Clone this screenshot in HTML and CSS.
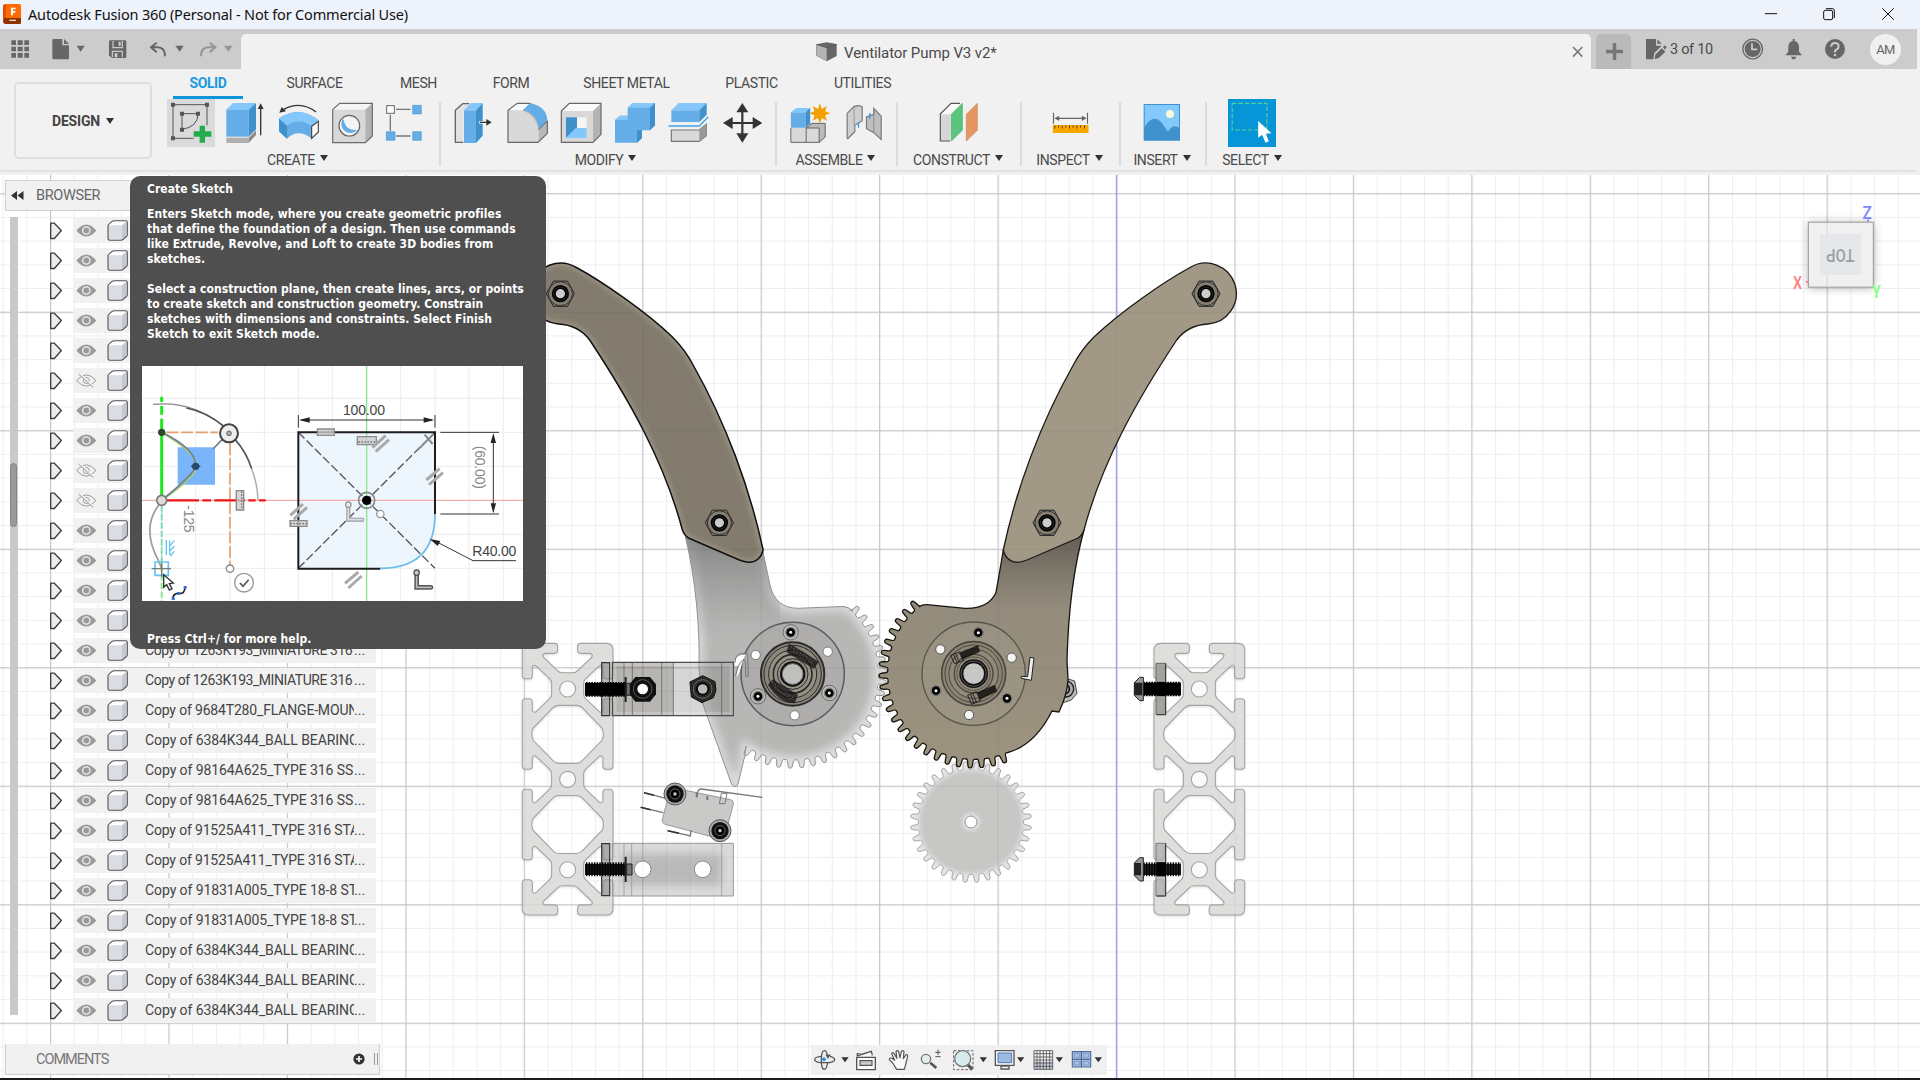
FILE: index.html
```html
<!DOCTYPE html>
<html lang="en">
<head>
<meta charset="utf-8">
<title>Autodesk Fusion 360</title>
<link rel="stylesheet" href="styles.css">
</head>
<body>
<svg class="defs" width="0" height="0">
  <defs>
    <symbol id="i-arrow" viewBox="138 142.5 81 75"><path d="M152 158h11l21 22-21 24h-11z" fill="#ececee" stroke="#3c3c3c" stroke-width="4" stroke-linejoin="round"/></symbol>
    <symbol id="i-eye" viewBox="219 142.5 90 75"><path d="M229 180q30-36 60 0q-30 36-60 0z" fill="#9a9a9a"/><circle cx="259" cy="180" r="11" fill="#9a9a9a" stroke="#f1f1f1" stroke-width="4"/></symbol>
    <symbol id="i-eye-off" viewBox="219 142.5 90 75"><g fill="none" stroke="#9a9a9a" stroke-width="3"><path d="M230 180q29-34 58 0q-29 34-58 0z"/><circle cx="259" cy="180" r="9"/><path d="M238 160l44 40" stroke="#f1f1f1" stroke-width="6"/><path d="M236 161l44 40"/></g></symbol>
    <symbol id="i-body" viewBox="309 142.5 90 75"><path d="M324 166q0-3 4-6l9-8q2-1 6-1h34q5 0 5 5v36q0 4-3 6l-11 10q-2 1-6 1h-32q-6 0-6-5z" fill="#fff"/><path d="M324 168q0-4 5-4h34q4 0 4 4v40h-36q-7 0-7-5z" fill="#dcdde3"/><path d="M366 164l14-12v44l-14 12z" fill="#c6c8d0"/><path d="M324 166q0-3 4-6l9-8q2-1 6-1h34q5 0 5 5v36q0 4-3 6l-11 10q-2 1-6 1h-32q-6 0-6-5z" fill="none" stroke="#4e5057" stroke-width="3.2"/></symbol>
    <symbol id="s-nut" viewBox="-20 -20 40 40" overflow="visible"><path d="M-7-12.6L7-12.6L14 0L7 12.6L-7 12.6L-14 0Z" fill="#857e70" stroke="#222" stroke-width="1"/><circle r="12" fill="none" stroke="#333"/><circle r="8.6" fill="#000"/><circle r="6.6" fill="none" stroke="#444" stroke-width=".6"/><circle r="4.6" fill="#ccc"/></symbol>
  </defs>
</svg>

<div class="app">
  <header class="titlebar">
    <svg class="logo" viewBox="9 12 54 60"><rect x="11" y="12" width="52" height="60" rx="5" fill="#ff6b00"/><path d="M9 16l8-4v60l-8-5z" fill="#d94f00"/><path d="M11 54h52v14q0 4-4 4H15l-4-4z" fill="#8f3200"/><path d="M33 23h14v5h-8v5h7v5h-7v8h-6z" fill="#fff"/><path d="M28 61h20" stroke="#fff" stroke-width="4" opacity=".8"/></svg>
    <span class="app-name">Autodesk Fusion 360 (Personal - Not for Commercial Use)</span>
    <svg class="win-controls" viewBox="1050 0 510 87" fill="none" stroke="#111" stroke-width="3"><path d="M1095 41h36"/><rect x="1271" y="31" width="27" height="28" rx="5"/><path d="M1278 26h20q5 0 5 6v22"/><path d="M1447 25l34 34M1481 25l-34 34"/></svg>
  </header>

  <div class="quickbar">
    <div class="quick-left">
      <svg width="40" height="40" viewBox="0 87 120 120" fill="#666"><path d="M34 121h14v14H34zM53 121h15v14H53zM73 121h14v14H73zM34 140h14v14H34zM53 140h15v14H53zM73 140h14v14H73zM34 159h14v14H34zM53 159h15v14H53zM73 159h14v14H73z"/></svg>
      <svg width="60" height="40" viewBox="120 87 180 120" fill="#666"><path d="M157 121q0-4 4-4h26v19h20v38q0 4-4 4h-42q-4 0-4-4z"/><path d="M192 117l15 15h-15z"/><path d="M230 137h24l-12 18z"/></svg>
      <svg width="40" height="40" viewBox="300 87 120 120"><path d="M327 125q0-4 4-4h44q4 0 4 4v46q0 3-4 3h-40l-8-8z" fill="#666"/><path d="M339 123v20h28v-20M337 172v-18h30v18" fill="none" stroke="#ccc" stroke-width="3.5"/><path d="M344 160h8v12h-8zM356 125h6v13h-6z" fill="#ccc"/></svg>
      <svg width="50" height="40" viewBox="420 87 150 120"><path d="M470 128l-17 14 17 15M455 142h18q22 0 22 27" fill="none" stroke="#666" stroke-width="6"/><path d="M526 137h25l-12 18z" fill="#666"/></svg>
      <svg width="51" height="40" viewBox="570 87 153 120"><path d="M629 128l17 14-17 15M645 142h-20q-22 0-22 27" fill="none" stroke="#959595" stroke-width="6"/><path d="M672 137h25l-12 18z" fill="#959595"/></svg>
    </div>
    <div class="doc-tab">
      <svg width="22" height="20" viewBox="1127 124 66 60"><path d="M1128 131l31-6 30 5v36l-30 16-31-17z" fill="#666"/><path d="M1129 132l30 9v40l-30-16z" fill="#b4b4b4"/><path d="M1129 132l30 9 30-9" fill="none" stroke="#555" stroke-width="2"/></svg>
      <span>Ventilator Pump V3 v2*</span>
      <svg class="tab-close" width="14" height="14" viewBox="512 134 42 42"><path d="M518 140l28 29M546 140l-28 29" stroke="#7c7c7c" stroke-width="5"/></svg>
    </div>
    <div class="new-tab"><svg width="17" height="17" viewBox="0 0 17 17"><path d="M8.5 0v17M0 8.500h17" stroke="#767676" stroke-width="3.400"/></svg></div>
    <div class="quick-right">
      <svg width="38" height="40" viewBox="693 87 114 120"><path d="M738 117h30v20h17l-22 22-3 19h-22z" fill="#666"/><path d="M772 118l13 13h-13z" fill="#666"/><path d="M766 164l19-19 11 10-20 19-12 4z" fill="#666"/><path d="M789 141l6-5 5 6-6 7z" fill="#666"/></svg>
      <span class="doc-count">3 of 10</span>
      <svg width="36" height="40" viewBox="1014 87 108 120"><circle cx="1058" cy="147" r="29.500" fill="none" stroke="#666" stroke-width="4"/><circle cx="1058" cy="147" r="24" fill="#666"/><path d="M1056 130v18h16" fill="none" stroke="#ccc" stroke-width="5"/></svg>
      <svg width="41" height="40" viewBox="1122 87 123 120"><path d="M1156 166l9-11v-13q0-16 13-19v-6h6v6q13 3 13 19v13l9 11zM1173 170h16q-2 8-8 8t-8-8z" fill="#666"/></svg>
      <svg width="41" height="40" viewBox="1245 87 123 120"><circle cx="1305" cy="147" r="30" fill="#666"/><path d="M1294 140q0-11 11-11t11 10q0 6-6 9t-5 9" fill="none" stroke="#ccc" stroke-width="6"/><circle cx="1305" cy="165" r="3.800" fill="#ccc"/></svg>
      <div class="avatar-slot"><span class="avatar">AM</span></div>
    </div>
  </div>

  <section class="ribbon">
    <button class="workspace">DESIGN<i class="caret"></i></button>
    <div class="ribbon-main">
      <nav class="tabs"><span class="active">SOLID</span><span>SURFACE</span><span>MESH</span><span>FORM</span><span>SHEET METAL</span><span>PLASTIC</span><span>UTILITIES</span></nav>
      <div class="groups">
        <div class="group create">
          <div class="tools">
            <svg class="hover" viewBox="501 297 144 144"><g fill="none" stroke="#555" stroke-width="3"><path d="M519 314h102v62M519 314v101h62M546 388v-47h48q0 40-48 47z"/></g><path d="M513 308h12v12h-12zM615 308h12v12h-12zM513 409h12v12h-12zM540 335h12v12h-12zM588 335h12v12h-12zM540 383h12v12h-12z" fill="#555"/><path d="M599 377h16v17h19v16h-19v18h-16v-18h-18v-16h18z" fill="#22ac4b"/></svg>
            <svg viewBox="663 297 144 144"><path d="M679 413h67v16h-67z" fill="#b0b0b0"/><path d="M746 413l22-22v14l-22 24z" fill="#8b8b8b"/><path d="M679 329l20-20h69l-22 20z" fill="#84c7fa"/><path d="M679 329h67v81h-67z" fill="#64ade6"/><path d="M746 329l22-20v79l-22 22z" fill="#3f90cb"/><path d="M782 406v-88" stroke="#333" stroke-width="4"/><path d="M773 327l9-17 9 17z" fill="#333"/></svg>
            <svg viewBox="825 297 144 144"><path d="M837 356q58-42 119 5l-18 17-3 38q-40-32-74 0l-24-23z" fill="#64ade6"/><path d="M837 356q58-42 119 5l-20 18q-40-28-75-2z" fill="#84c7fa"/><path d="M837 356l24 21v39l-24-22z" fill="#3f90cb"/><path d="M935 379l20-15v32l-20 19z" fill="#fff" stroke="#444" stroke-width="3.500"/><path d="M948 336q-46-35-97-8" fill="none" stroke="#333" stroke-width="4"/><path d="M838 338l7-17 13 13z" fill="#333"/></svg>
            <svg viewBox="987 297 144 144"><path d="M998 329l21-19h98l-21 19z" fill="#f5f5f5"/><path d="M998 329h98v99h-98z" fill="#d8d8d8"/><path d="M1096 329l21-19v98l-21 20z" fill="#b3b3b3"/><path d="M998 329l21-19h98v98l-21 20h-98z" fill="none" stroke="#6b6b6b" stroke-width="3.500"/><circle cx="1048" cy="377" r="31" fill="#f4f4f4" stroke="#666" stroke-width="3.500"/><path d="M1030 355q5 40 42 34a26 26 0 1 1-42-34z" fill="#64ade6"/></svg>
            <svg viewBox="1149 297 144 144"><path d="M1188 328h44M1171 344v48M1188 408h44" stroke="#777" stroke-width="4"/><rect x="1160" y="317" width="23" height="23" fill="#fff" stroke="#666" stroke-width="3"/><path d="M1238 316h26v26h-26zM1159 395h26v26h-26zM1238 395h26v26h-26z" fill="#64ade6" stroke="#3f90cb" stroke-width="1.500"/></svg>
          </div>
          <div class="label">CREATE<i class="caret"></i></div>
        </div>
        <div class="group modify">
          <div class="tools">
            <svg viewBox="27 297 144 144"><path d="M46 331l22-20h20v18l-18 12v86H46z" fill="#e2e2e2"/><path d="M88 311H68l-22 20v96h24" fill="none" stroke="#666" stroke-width="4"/><path d="M72 331l21-22h35l-20 22z" fill="#84c7fa"/><path d="M72 331h36v98H72z" fill="#64ade6"/><path d="M108 331l20-22v98l-20 22z" fill="#3f90cb"/><path d="M117 367h25" stroke="#fff" stroke-width="8"/><path d="M119 367h23" stroke="#333" stroke-width="4"/><path d="M139 357l16 10-16 10z" fill="#333"/></svg>
            <svg viewBox="189 297 144 144"><path d="M204 331l28-21h38q44 15 52 52v38l-28 27h-90z" fill="#b8b8b8"/><path d="M204 331l28-21h38l-22 22z" fill="#fafafa"/><path d="M204 332h42q40 8 50 60v35h-92z" fill="#d9d9d9"/><path d="M270 310h-38l-28 21v96h90l28-27v-38M296 388l26-26" fill="none" stroke="#666" stroke-width="3.500"/><path d="M248 331l23-22q50 12 51 52l-25 26q-8-49-49-56z" fill="#64ade6"/></svg>
            <svg viewBox="351 297 144 144"><path d="M364 333l24-23h95v93l-24 24h-95z" fill="#fafafa"/><path d="M459 333l24-23v93l-24 24z" fill="#b3b3b3"/><path d="M364 333h95v94h-95z" fill="#d8d8d8"/><path d="M364 333l24-23h95v93l-24 24h-95z" fill="none" stroke="#666" stroke-width="3.500"/><path d="M378 352h62v62h-62z" fill="#f5f5f5"/><path d="M378 352h33v32l-33 30z" fill="#3f90cb"/><path d="M378 414l29-30h33v30z" fill="#84c7fa"/></svg>
            <svg viewBox="513 297 144 144"><path d="M525 360l15-13h23v-24l15-14h67v67l-15 15h-24v23l-15 14h-66z" fill="#64ade6"/><path d="M563 323l15-14h67l-15 14zM525 360l15-13h23v13z" fill="#84c7fa"/><path d="M630 323l15-14v67l-15 15zM591 391h15v23l-15 14z" fill="#3f90cb"/></svg>
            <svg viewBox="675 297 144 144"><path d="M694 331l22-22h84l-22 22z" fill="#84c7fa"/><path d="M694 331h84v35h-84z" fill="#64ade6"/><path d="M778 331l22-22v35l-22 22z" fill="#3f90cb"/><path d="M686 378h92l27-28" fill="none" stroke="#3fa3e8" stroke-width="4"/><path d="M694 390h84l21-17v34l-21 17h-84z" fill="#d9d9d9" stroke="#777" stroke-width="3.500"/><path d="M778 390l21-18v35l-21 17z" fill="#999"/></svg>
            <svg viewBox="837 297 144 144"><path d="M907 330v78M870 369h76" stroke="#333" stroke-width="6.500"/><path d="M907 309l18 28h-36zM907 428l18-28h-36zM849 369l29-18v36zM967 369l-29-18v36z" fill="#333"/></svg>
          </div>
          <div class="label">MODIFY<i class="caret"></i></div>
        </div>
        <div class="group">
          <div class="tools">
            <svg viewBox="1033.500 297 144 144"><path d="M1051 384l1 44h84l18-16v-42h-40z" fill="#d9d9d9"/><path d="M1136 384l18-14v42l-18 16zM1097 384l14-14h43l-18 14z" fill="#bbb"/><path d="M1051 384v43h85l18-16v-41h-40l-17 14v43M1097 384h39v43" fill="none" stroke="#666" stroke-width="3"/><path d="M1051 337l16-13h42l-14 13z" fill="#84c7fa"/><path d="M1051 337h44v46h-44z" fill="#64ade6"/><path d="M1095 337l14-13v46l-14 13z" fill="#3f90cb"/><path d="M1138 310l6 17 15-9-5 16 15 6-15 6 5 16-15-8-6 17-6-17-15 8 5-16-16-6 16-6-5-16 15 9z" fill="#f4a000"/></svg>
            <svg viewBox="1195.500 297 144 144"><path d="M1220 340l21-21q18-5 24 2v41l-22 14v19l-21 21q-3 0-2-6z" fill="#cfcfcf" stroke="#777" stroke-width="3.500"/><path d="M1241 322v55" stroke="#999" stroke-width="3"/><path d="M1300 325l22 24v69l-22-20-22-12v-35l22-8z" fill="#bfbfbf" stroke="#777" stroke-width="3.500"/><path d="M1300 325v72" stroke="#888" stroke-width="3"/><path d="M1254 366v17M1288 339v17" stroke="#2d9ae5" stroke-width="4"/></svg>
          </div>
          <div class="label">ASSEMBLE<i class="caret"></i></div>
        </div>
        <div class="group">
          <div class="tools">
            <svg viewBox="102 297 144 144"><path d="M121 342l31-31h32l-33 33v79h-30z" fill="#fafafa"/><path d="M122 343h29v80h-29z" fill="#d6d6d6"/><path d="M180 310h-27l-32 32v81h29" fill="none" stroke="#555" stroke-width="3.500"/><path d="M154 343l33-33v81l-33 32z" fill="#5bc47f" stroke="#43ad68" stroke-width="2"/><path d="M199 343l33-33v81l-33 32z" fill="#e59663" stroke="#d08450" stroke-width="2"/></svg>
          </div>
          <div class="label">CONSTRUCT<i class="caret"></i></div>
        </div>
        <div class="group">
          <div class="tools">
            <svg viewBox="436.500 297 144 144"><path d="M459 338v33M561 338v33M465 355h90" stroke="#666" stroke-width="3.500"/><path d="M462 355l14-8v16zM558 355l-14-8v16z" fill="#666"/><path d="M457 375h107v24H457z" fill="#faa700"/><path d="M463 376v10M474 376v7M485 376v10M496 376v7M507 376v10M518 376v7M529 376v10M540 376v7M552 376v10" stroke="#5d4a1a" stroke-width="3"/></svg>
          </div>
          <div class="label">INSPECT<i class="caret"></i></div>
        </div>
        <div class="group">
          <div class="tools">
            <svg viewBox="714 297 144 144"><rect x="732" y="313" width="107" height="108" fill="#84c9fb"/><path d="M732 384q32-56 64 0l8 11q16-26 35-10v36H732z" fill="#3f92cd"/><circle cx="810" cy="342" r="12" fill="#fbfadb"/><rect x="732.500" y="313.500" width="106" height="107" fill="none" stroke="#3f92cd" stroke-width="3"/></svg>
          </div>
          <div class="label">INSERT<i class="caret"></i></div>
        </div>
        <div class="group">
          <div class="tools">
            <svg viewBox="985.500 297 144 144"><path d="M985 297h145v144H985z" fill="#0696d7"/><path d="M998 310h104v80H998z" fill="none" stroke="#54cf9c" stroke-width="3.500" stroke-dasharray="13 6"/><path d="M1076 363v50l12-9 10 24 10-4-9-23 17-1z" fill="#fff"/></svg>
          </div>
          <div class="label">SELECT<i class="caret"></i></div>
        </div>
      </div>
    </div>
  </section>

  <main class="viewport">
    <svg class="scene" viewBox="0 175 1920 903">
      <defs>
        <pattern id="minor" x="50" y="193.200" width="23.690" height="23.700" patternUnits="userSpaceOnUse"><path d="M0 .500H23.690M.500 0V23.700" stroke="#000" stroke-opacity=".065"/></pattern>
        <pattern id="major" x="50" y="193.200" width="118.440" height="118.500" patternUnits="userSpaceOnUse"><path d="M0 .600H118.440M.600 0V118.500" stroke="#000" stroke-opacity=".13" stroke-width="1.200"/></pattern>
        <filter id="b2" x="-20%" y="-20%" width="140%" height="140%"><feGaussianBlur stdDeviation="2"/></filter>
        <filter id="b5" x="-20%" y="-20%" width="140%" height="140%"><feGaussianBlur stdDeviation="5"/></filter>
        <filter id="b12" x="-30%" y="-30%" width="160%" height="160%"><feGaussianBlur stdDeviation="12"/></filter>
        <clipPath id="clipL"><path data-shape="plateL"/></clipPath>
        <clipPath id="clipR"><path data-shape="plateR"/></clipPath>
        <clipPath id="clipArm"><path data-shape="arm"/></clipPath>
        <linearGradient id="neckL" x1="0" y1="530" x2="0" y2="640" gradientUnits="userSpaceOnUse"><stop offset="0" stop-color="#666" stop-opacity=".75"/><stop offset="1" stop-color="#888" stop-opacity="0"/></linearGradient>
        <linearGradient id="neckR" x1="0" y1="535" x2="0" y2="610" gradientUnits="userSpaceOnUse"><stop offset="0" stop-color="#55534a" stop-opacity=".8"/><stop offset="1" stop-color="#6d695e" stop-opacity="0"/></linearGradient>
        <linearGradient id="plate" x1="0" y1="560" x2="0" y2="770" gradientUnits="userSpaceOnUse"><stop offset="0" stop-color="#91897b"/><stop offset="1" stop-color="#9c947f"/></linearGradient>
        <g id="rail"><path data-shape="rail" fill="#999996" fill-rule="evenodd" opacity=".45" filter="url(#b5)" transform="translate(0 3)"/><path data-shape="rail" fill="#dededc" stroke="#a3a3a1" stroke-width="3.200" fill-rule="evenodd"/><g fill="#fafafa" stroke="#a3a3a1" stroke-width="3.200"><circle cx="136" cy="137" r="24"/><circle cx="136" cy="408" r="24"/><circle cx="136" cy="679" r="24"/></g></g>
        <g id="pin"><circle r="15" fill="#c9c9c7" stroke="#555" stroke-width="2"/><circle r="13" fill="#000"/><circle r="4.500" fill="#fff"/></g>
      </defs>
      <rect y="175" width="1920" height="903" fill="#fff"/>
      <rect y="175" width="1920" height="903" fill="url(#minor)"/>
      <rect y="175" width="1920" height="903" fill="url(#major)"/>
      <path d="M1116.600 175v903" stroke="#a9a7fb" stroke-width="1.600"/>

      <use href="#rail" transform="translate(1154 643.400) scale(.33333)"/>
      <use href="#rail" transform="translate(522.300 643.400) scale(.33333)"/>

      <!-- drive pinion -->
      <g opacity=".92"><path data-shape="pinion" fill="#e2e2e1" stroke="#9b9b9b" stroke-width="1"/><circle cx="971" cy="822" r="51.500" fill="#c3c3c1" filter="url(#b2)"/><circle cx="971" cy="822" r="8" fill="#eee" filter="url(#b2)"/><circle cx="971" cy="822" r="6" fill="#fff" stroke="#888"/></g>

      <!-- left plate -->
      <g opacity=".95"><path data-shape="plateL" fill="#b4b4b2"/><g clip-path="url(#clipL)"><path data-shape="plateL" fill="none" stroke="#fff" stroke-opacity=".6" stroke-width="8" filter="url(#b5)"/><rect x="680" y="525" width="100" height="120" fill="url(#neckL)"/></g><path data-shape="plateL" fill="none" stroke="#8d8d8d" stroke-width="1"/></g>

      <g transform="translate(500 600) scale(.33333)">
        <circle cx="878" cy="222" r="155" fill="#9a9994" fill-opacity=".3" stroke="#5c5c5c" stroke-width="4.500"/>
        <circle cx="878" cy="222" r="95" fill="#8a867b" stroke="#2c2c2c" stroke-width="6"/>
        <g fill="none" stroke="#2a2a28"><circle cx="878" cy="222" r="86" stroke-width="3"/><circle cx="878" cy="222" r="72" stroke-width="3" fill="#969185"/><circle cx="878" cy="222" r="58" stroke-width="5"/><circle cx="878" cy="222" r="46" stroke-width="3"/></g>
        <g fill="#151515" fill-opacity=".78"><path d="M866 132l14 5 76 48-14 22-82-50z"/><path d="M804 254l14-16 76 46-10 26q-50-4-80-56z"/></g>
        <path d="M872 140l72 46M816 244l64 50M880 154l56 38M824 262l50 36" stroke="#777" stroke-width="2.500" stroke-dasharray="4 7"/>
        <circle cx="878" cy="222" r="38" fill="#111"/><circle cx="878" cy="222" r="31" fill="#bfbfbc" stroke="#777" stroke-width="3"/>
        <g fill="#bdbdba" stroke="#666" stroke-width="3"><circle cx="872" cy="97" r="23"/><circle cx="774" cy="289" r="23"/><circle cx="988" cy="279" r="23"/></g>
        <use href="#pin" x="872" y="97"/><use href="#pin" x="774" y="289"/><use href="#pin" x="988" y="279"/>
        <g fill="#fff" stroke="#777" stroke-width="3"><circle cx="767" cy="165" r="14"/><circle cx="983" cy="155" r="14"/><circle cx="884" cy="346" r="14"/></g>
        <path d="M703 190q2-20 20-24l14-3q-10 22-16 44-7 24-14 22 4-12 10-32l-12 2z" fill="#fff"/><path d="M705 188q0-24 18-27h20l2 68h-8q2-58-8-50-16 12-22 50" fill="none" stroke="#777" stroke-width="3"/>

        <!-- brackets -->
        <path d="M337 187h363v160H337z" fill="#777" fill-opacity=".3" stroke="#444" stroke-width="3.500"/>
        <path d="M337 187h183v160H337z" fill="#4e4638" fill-opacity=".22"/><path d="M344 193h350v148H344z" fill="none" stroke="#fff" stroke-opacity=".2" stroke-width="10"/>
        <path d="M372 187v160M397 187v160M485 187v160M520 187v160M665 187v160" stroke="#555" stroke-width="2" fill="none"/>
        <path d="M337 730h363v158H337z" fill="#999" fill-opacity=".36" stroke="#999" stroke-width="3"/>
        <path d="M370 762h296v94H370z" fill="#777" fill-opacity=".32" filter="url(#b12)"/><path d="M372 730v158M395 730v158M665 730v158" stroke="#999" stroke-width="2.500"/>
        <g fill="#fff" stroke="#888" stroke-width="3"><circle cx="428" cy="808" r="25"/><circle cx="608" cy="808" r="25"/></g>
        <!-- bracket fasteners -->
        <g fill="#777" fill-opacity=".5" stroke="#333" stroke-width="3.500"><path d="M305 188h24v159h-24z"/><path d="M305 731h24v156h-24z"/></g>
        <g stroke="#000"><path d="M255 268h122" stroke-width="38"/><path d="M258 268h120" stroke-width="44" stroke-dasharray="5 3"/><path d="M255 808h120" stroke-width="34" stroke="#151515"/><path d="M258 808h118" stroke-width="42" stroke-dasharray="4 4"/><path d="M377 231v75M377 770v76" stroke-width="6" stroke="#222"/></g>
        <path d="M380 250h16v36h-16zM380 792h16v33h-16z" fill="#777" stroke="#222" stroke-width="3"/>
        <path d="M406 231h44l18 22v30l-18 22h-44l-17-22v-30z" fill="#111"/><circle cx="428" cy="267" r="28" fill="none" stroke="#666" stroke-width="2.500"/><circle cx="428" cy="267" r="16" fill="#fff"/>
        <path d="M608 227l37 18 3 26-8 22-34 15-32-17-4-45z" fill="#2b2926" stroke="#111" stroke-width="3"/><circle cx="608" cy="267" r="28" fill="none" stroke="#777" stroke-width="2.500"/><circle cx="608" cy="267" r="17" fill="#bbb" stroke="#000" stroke-width="5"/>

        <!-- limit switch -->
        <path d="M512 562l180 37q10 3 8 13l-26 98q-3 10-14 7l-164-44q-11-3-9-14z" fill="#bfbfbd" fill-opacity=".85" stroke="#999" stroke-width="3"/>
        <path d="M432 578l68 18M422 622l68 16M503 692l68 16 2-18M590 592q2-26 14-25l183 25" fill="none" stroke="#777" stroke-width="4"/>
        <path d="M432 578l30 8M422 622l30 7M503 692l34 8" stroke="#333" stroke-width="4.500"/>
        <path d="M664 580h17l-6 31h-17z" fill="none" stroke="#777" stroke-width="3"/><path d="M622 588v12M590 578v14" stroke="#777" stroke-width="6"/>
        <g fill="#aaa" stroke="#555" stroke-width="3"><circle cx="525" cy="582" r="33"/><circle cx="660" cy="692" r="33"/></g><g fill="#111"><circle cx="525" cy="582" r="26"/><circle cx="660" cy="692" r="26"/></g><g fill="#000" stroke="#777" stroke-width="2.500"><circle cx="525" cy="582" r="15"/><circle cx="660" cy="692" r="15"/></g><g fill="#ccc"><circle cx="525" cy="582" r="5"/><circle cx="660" cy="692" r="5"/></g>
      </g>

      <g transform="translate(860 560) scale(.33333)">
        <!-- rail fasteners -->
        <path d="M888 310h29v154h-29z" fill="#9a9a97" fill-opacity=".85" stroke="#666" stroke-width="3"/><path d="M888 850h29v158h-29z" fill="#aaaaa7" fill-opacity=".7" stroke="#777" stroke-width="3"/><path d="M917 310v154M917 850v158M890 464h27M890 1008h27" stroke="#333" stroke-width="3"/>
        <g stroke="#000"><path d="M845 387h118" stroke-width="38"/><path d="M850 387h113" stroke-width="44" stroke-dasharray="5 3"/><path d="M848 928h115" stroke-width="34" stroke="#222"/><path d="M850 928h113" stroke-width="42" stroke-dasharray="4 4"/></g>
        <path d="M890 366h26v42h-26zM890 907h26v42h-26z" fill="#000"/>
        <path d="M823 368l16-16h11v70h-11l-16-16zM823 909l16-16h11v70h-11l-16-16z" fill="#999" stroke="#222" stroke-width="3"/><path d="M823 368h24v38h-24zM823 909h20v37h-20z" fill="#222"/>
        <path d="M618 355l26 8 7 37-17 20-24 8z" fill="#bbb" stroke="#444" stroke-width="3"/><circle cx="617" cy="387" r="24" fill="#aaa" stroke="#222" stroke-width="4"/><circle cx="612" cy="387" r="16" fill="#bbb" stroke="#111" stroke-width="5"/>
      </g>

      <!-- right plate -->
      <path data-shape="plateR" fill="url(#plate)"/>
      <g clip-path="url(#clipR)"><rect x="990" y="530" width="100" height="90" fill="url(#neckR)"/></g>
      <path data-shape="plateR" fill="none" stroke="#17150f" stroke-width="1.300"/>
      <g transform="translate(860 560) scale(.33333)">
        <circle cx="341" cy="341" r="155" fill="#fff" fill-opacity=".04" stroke="#59554b" stroke-width="4"/>
        <circle cx="341" cy="341" r="96" fill="#8b8475" stroke="#4a463d" stroke-width="5"/>
        <g fill="none" stroke="#4a463d"><circle cx="341" cy="341" r="86" stroke-width="3"/><circle cx="341" cy="341" r="74" fill="#918a7b" stroke-width="3"/><circle cx="341" cy="341" r="58" stroke-width="4"/><circle cx="341" cy="341" r="50" stroke-width="2.500"/></g>
        <g fill="#111" fill-opacity=".85"><path d="M298 279l56-24 6 20-54 24z"/><path d="M350 398l54-24 8 20-54 26z"/></g>
        <g fill="none" stroke="#222" stroke-width="3"><path d="M272 286l28-11 12 26-28 10zM323 406l26-11 12 26-26 12zM280 283l12 26M286 280l12 26M332 403l10 28M338 400l12 28"/></g>
        <circle cx="341" cy="341" r="43" fill="#111"/><circle cx="341" cy="341" r="38" fill="none" stroke="#777" stroke-width="2"/><circle cx="341" cy="341" r="31" fill="#c7c7c5"/>
        <use href="#pin" x="355" y="218"/><use href="#pin" x="228" y="392"/><use href="#pin" x="441" y="415"/>
        <g fill="#f4f4f4" stroke="#555" stroke-width="3"><circle cx="241" cy="268" r="14"/><circle cx="455" cy="293" r="14"/><circle cx="327" cy="465" r="14"/></g>
        <path d="M510 292l12 2-8 67-30-6v-6l19 1z" fill="#eee" stroke="#222" stroke-width="3"/>
      </g>

      <!-- arms -->
      <g><path data-shape="arm" fill="#a19986"/><path data-shape="arm" fill="none" stroke="#1c1a16" stroke-width="1.300"/></g>
      <g transform="matrix(-1 0 0 1 1766.400 0)"><path data-shape="arm" fill="#827b6e"/><g clip-path="url(#clipArm)"><path data-shape="arm" fill="none" stroke="#979080" stroke-width="7" filter="url(#b2)"/></g><path data-shape="arm" fill="none" stroke="#111" stroke-width="1.500"/></g>
      <use href="#s-nut" x="1186" y="273.700" width="40" height="40"/><use href="#s-nut" x="1027" y="502.800" width="40" height="40"/>
      <use href="#s-nut" x="540.400" y="273.700" width="40" height="40"/><use href="#s-nut" x="699.400" y="502.800" width="40" height="40"/>
      <rect y="175" width="1920" height="903" fill="url(#major)" opacity=".35"/>

      <!-- view cube -->
      <rect x="1808.500" y="223" width="65" height="65" fill="#000" opacity=".3" filter="url(#b5)"/>
      <rect x="1808.400" y="222.200" width="65" height="65" fill="#f0f0f0" stroke="#a6a6a6" stroke-width="1.200"/>
      <path d="M1827 223v64" stroke="#d5d5d5"/>
      <rect x="1820" y="234" width="41" height="41" fill="#e4e6e9" opacity=".9"/>
      <text class="cube-face" transform="translate(1840.300 248.500) rotate(180) scale(.82 1)" text-anchor="middle">TOP</text>
      <text class="axis" transform="translate(1862.500 218.500) scale(.86 1)" fill="#8583ff">Z</text><text class="axis" transform="translate(1793 288.500) scale(.8 1)" fill="#ff8080">X</text><text class="axis" transform="translate(1872 297.500) scale(.8 1)" fill="#80ff80">Y</text>
      <path d="M1868 219.500v2" stroke="#8583ff" stroke-width="2"/><path d="M1806 282h2" stroke="#ff8080" stroke-width="2"/>
    </svg>

    <aside class="side">
      <div class="browser-head"><svg width="13" height="9" viewBox="0 0 13 9"><path d="M6 0v9L0 4.500zM12.500 0v9L6.500 4.500z" fill="#333"/></svg><span>BROWSER</span></div>
      <div class="tree-wrap">
        <div class="scroll-track"><div class="scroll-thumb"></div></div>
        <div class="tree" id="tree"></div>
      </div>
      <div class="comments"><span>COMMENTS</span><svg width="12" height="12" viewBox="0 0 12 12"><circle cx="6" cy="6" r="5.600" fill="#333"/><path d="M6 3v6M3 6h6" stroke="#fff" stroke-width="1.600"/></svg><i class="grip"></i></div>
    </aside>

    <div class="navbar">
      <svg width="42" height="30" viewBox="93 75 126 90"><g fill="none" stroke="#555" stroke-width="4"><path d="M150 109q14 4 14 10 0 9-30 9t-30-9q0-9 22-10"/><path d="M143 126q-3 22-10 22-9 0-9-28t9-28q7 0 9 15"/></g><path d="M137 104l14 0-7 12zM147 103l9 8" fill="#555" stroke="#555"/><path d="M126 118h12M132 112v12" stroke="#1c8de0" stroke-width="5"/><path class="nav-caret" d="M184 112h22l-11 15z"/></svg>
      <svg width="29" height="30" viewBox="219 75 87 90"><path d="M230 112h56v37h-56z" fill="#fafafa" stroke="#555" stroke-width="4" stroke-linejoin="round"/><path d="M240 122h36v14h-36z" fill="#c9ccd3" stroke="#555" stroke-width="3.500"/><path d="M230 108l44-14 3 12M232 108v-7l14 2" fill="#fff" stroke="#555" stroke-width="4"/></svg>
      <svg width="32" height="30" viewBox="306 75 96 90"><path d="M350 148l-12-19-10-10q0-7 8-4l8 6-9-20q2-6 7-1l9 15-3-20q4-6 8 0l4 19 4-20q5-5 8 1l-2 21 7-11q6-3 6 4l-5 20-5 19z" fill="#fafafa" stroke="#555" stroke-width="3.500" stroke-linejoin="round"/></svg>
      <svg width="32" height="30" viewBox="402 75 96 90"><path d="M451 128l18 16" stroke="#555" stroke-width="8"/><circle cx="438" cy="117" r="14" fill="#dfeeef" stroke="#777" stroke-width="4"/><path d="M466 97h16M474 89v16M466 110h16" stroke="#555" stroke-width="3"/></svg>
      <svg width="44" height="30" viewBox="498 75 132 90"><path d="M521 92h58v57h-58z" fill="none" stroke="#666" stroke-width="3" stroke-dasharray="8 5"/><path d="M563 134l14 14" stroke="#555" stroke-width="9"/><circle cx="548" cy="116" r="24" fill="#d6ecec" stroke="#777" stroke-width="4"/><path class="nav-caret" d="M599 112h22l-11 15z"/></svg>
      <svg width="38" height="30" viewBox="630 75 114 90"><path d="M646 92h56v44h-56z" fill="#fafafa" stroke="#555" stroke-width="4"/><path d="M654 99h41v29h-41z" fill="#9dbbe2" stroke="#5477a8" stroke-width="3"/><path d="M663 138h24v9h-24z" fill="#fff" stroke="#555" stroke-width="4"/><path class="nav-caret" d="M711 112h22l-11 15z"/></svg>
      <svg width="39" height="30" viewBox="744 75 117 90"><path d="M762 92h56v56h-56z" fill="#fafafa"/><path d="M762 125h56v23h-56z" fill="#c5cddd"/><path d="M762 92h56v56h-56zM771 92v56M780 92v56M790 92v56M799 92v56M809 92v56M762 101h56M762 111h56M762 120h56M762 129h56M762 139h56" fill="none" stroke="#555" stroke-width="2.600"/><path class="nav-caret" d="M827 112h22l-11 15z"/></svg>
      <svg width="40" height="30" viewBox="861 75 120 90"><path d="M877 95h55v46h-55z" fill="#a9c1e3" stroke="#4e6d99" stroke-width="3.500"/><path d="M904 95v46M877 118h55" stroke="#4e6d99" stroke-width="4"/><path d="M883 101h15v11h-15zM910 101h16v11h-16zM883 124h15v11h-15zM910 124h16v11h-16z" fill="none" stroke="#6b89b5" stroke-width="2"/><path class="nav-caret" d="M944 112h22l-11 15z"/></svg>
    </div>

    <div class="tooltip">
      <h1>Create Sketch</h1>
      <p>Enters Sketch mode, where you create geometric profiles<br>that define the foundation of a design. Then use commands<br>like Extrude, Revolve, and Loft to create 3D bodies from<br>sketches.</p>
      <p>Select a construction plane, then create lines, arcs, or points<br>to create sketch and construction geometry. Constrain<br>sketches with dimensions and constraints. Select Finish<br>Sketch to exit Sketch mode.</p>
      <svg class="preview" viewBox="37 48 1143 705">
        <rect x="37" y="48" width="1143" height="705" fill="#fff"/>
        <path d="M96 48v705M198 48v705M301 48v705M404 48v705M506 48v705M608 48v705M813 48v705M916 48v705M1018 48v705M1121 48v705M37 145h1143M37 247h1143M37 349h1143M37 553h1143M37 655h1143" stroke="#ececee" stroke-width="3"/>
        <path d="M506 247h410v245q0 163-164 163H506z" fill="#eef6fd"/>
        <path d="M37 451h1143" stroke="#f49a9a" stroke-width="3"/><path d="M711 48v705" stroke="#8fe68f" stroke-width="4"/>
        <path d="M506 247l410 408M506 655l410-408" stroke="#555" stroke-width="4" stroke-dasharray="26 9"/>
        <path d="M752 656H506V247h410v245" fill="none" stroke="#1d1d1d" stroke-width="6"/><path d="M916 492q0 163-164 163" fill="none" stroke="#6cbcec" stroke-width="5"/>
        <g stroke="#333" stroke-width="3" fill="none"><path d="M506 195v38M916 195v38M515 210h392M932 247h176M932 492h176M1091 262v216M910 570l120 62h129"/></g>
        <path d="M508 210l32-8v16zM914 210l-32-8v16zM1091 249l-8 30h16zM1091 490l-8-30h16zM900 567l32 6-8 15z" fill="#222"/>
        <g class="dim"><text x="640" y="196" textLength="126">100.00</text><text x="1028" y="618" textLength="132">R40.00</text><text transform="translate(1036 287) rotate(90)" textLength="130" class="soft">(60.00)</text><text transform="translate(162 466) rotate(90)" textLength="82" class="soft">-125</text></g>
        <path d="M70 163q120-12 214 68" fill="none" stroke="#888" stroke-width="4"/><path d="M170 174q62 12 114 56M316 268q34 38 50 88" fill="none" stroke="#555" stroke-width="5"/><path d="M366 356q18 48 19 94" fill="none" stroke="#aaa" stroke-width="4"/>
        <path d="M110 247h155M301 280v365" stroke="#e0a070" stroke-width="5" stroke-dasharray="36 8" fill="none"/>
        <path d="M144 292h112v112H144z" fill="#7ab4fb"/>
        <path d="M96 247q104 60 104 102 0 30-104 102" fill="none" stroke="#a7c97c" stroke-width="6"/><path d="M96 247q104 50 102 102-3 20-90 92M278 268l-28 29" fill="none" stroke="#708090" stroke-width="5"/>
        <path d="M96 140v16M96 168v26M96 206v235" stroke="#1fe81f" stroke-width="9"/><path d="M96 465v288" stroke="#8de88d" stroke-width="6" stroke-dasharray="18 8"/><path d="M96 470v180" stroke="#74cdea" stroke-width="4" stroke-dasharray="6 6"/>
        <path d="M110 451h98M218 451h26M254 451h92M356 451h22M388 451h20" stroke="#f01515" stroke-width="7"/>
        <circle cx="96" cy="247" r="11" fill="#2b4a2b"/><circle cx="198" cy="349" r="11" fill="#2b4a6b"/><path d="M184 349h28" stroke="#2b4a6b" stroke-width="4"/>
        <circle cx="96" cy="451" r="15" fill="#ddd" stroke="#777" stroke-width="5"/><circle cx="298" cy="250" r="27" fill="#eee" stroke="#444" stroke-width="6"/><circle cx="298" cy="250" r="7" fill="#aaa" stroke="#666" stroke-width="3"/>
        <path d="M88 464q-54 70-2 167l10 24" fill="none" stroke="#999" stroke-width="5"/>
        <path d="M76 636h40v40H76z" fill="none" stroke="#62c4f0" stroke-width="5"/><path d="M66 656h58M96 640v40" stroke="#777" stroke-width="4"/>
        <path d="M110 570v46M120 572v44M134 572l-12 14M134 588l-12 14M134 604l-12 14" stroke="#62c4f0" stroke-width="4"/>
        <circle cx="301" cy="656" r="11" fill="#fff" stroke="#888" stroke-width="4"/><circle cx="343" cy="698" r="28" fill="#fff" stroke="#999" stroke-width="4"/><path d="M331 699l9 10 17-20" fill="none" stroke="#555" stroke-width="5"/>
        <path d="M102 674v38l9-8 8 16 8-4-8-15 12-2z" fill="#fff" stroke="#333" stroke-width="4"/><path d="M130 746q0-16 16-16 20 4 20-20" fill="none" stroke="#222" stroke-width="5"/><path d="M126 742h9v8h-9zM143 726h9v8h-9zM162 708h9v8h-9z" fill="#2c6fd6"/>
        <g fill="#ccc" fill-opacity=".8" stroke="#8a8a8a" stroke-width="4"><path d="M563 237h51v19h-51zM683 260h57v24h-57zM320 422h22v58h-22zM481 512h51v17h-51z"/></g><path d="M686 276h52M336 424v54M482 521h48" stroke="#777" stroke-width="4" stroke-dasharray="5 4"/>
        <g stroke="#aaa" stroke-width="9"><path d="M728 293l40-36M738 305l40-36M890 390l40-34M898 404l42-36M482 496l38-34M492 508l40-36M646 700l40-34M656 714l40-36"/></g>
        <path d="M885 254l24 28M866 298l44-44" stroke="#888" stroke-width="6"/>
        <g fill="none" stroke-linecap="round"><path d="M656 464v45h42" stroke="#999" stroke-width="12"/><path d="M656 464v45h42" stroke="#dde3e8" stroke-width="5"/><path d="M861 668v44h43" stroke="#555" stroke-width="14"/><path d="M861 668v44h43" stroke="#bbb" stroke-width="5"/></g>
        <circle cx="656" cy="464" r="8" fill="#eee" stroke="#999" stroke-width="4"/><circle cx="861" cy="668" r="8" fill="#ccc" stroke="#555" stroke-width="4"/>
        <circle cx="711" cy="451" r="24" fill="none" stroke="#888" stroke-width="5"/><circle cx="711" cy="451" r="14" fill="#000"/><circle cx="752" cy="492" r="11" fill="#fff" stroke="#999" stroke-width="4"/>
      </svg>
      <div class="more">Press Ctrl+/ for more help.</div>
    </div>
  </main>
  <footer class="edge"></footer>
</div>
<script src="script.js"></script>
</body>
</html>
```
FILE: styles.css
```css
* { box-sizing: border-box; }
body { margin: 0; overflow: hidden; font-family: Roboto, "Liberation Sans", sans-serif; font-size: 14px; color: #4a4a4a; }
svg { display: block; flex: none; }
.defs { position: absolute; }
.app { width: 1920px; height: 1080px; display: grid; grid-template-rows: 29px 40px 106px 903px 2px; background: #f1f1f1; }

.titlebar { display: flex; align-items: center; background: #eef2fa; padding-left: 3px; }
.logo { width: 18px; height: 20px; margin-bottom: 1px; }
.app-name { margin: 0 0 2px 7px; font-family: "Noto Sans", sans-serif; font-size: 14.5px; letter-spacing: -.16px; color: #111; flex: 1; }
.win-controls { width: 170px; height: 29px; }

.quickbar { display: flex; background: #ccc; width: 1917px; }
.quick-left { display: flex; width: 241px; }
.doc-tab { width: 1350px; margin-top: 5px; background: #f1f1f1; border-radius: 5px 5px 0 0; display: flex; align-items: center; padding: 0 6px 0 575px; font-size: 15px; gap: 6px; }
.doc-tab span { flex: 1; padding-top: 2px; letter-spacing: -.1px; }
.new-tab { width: 35px; margin: 5px 0 0 5px; background: #bababa; border-radius: 5px 5px 0 0; display: flex; align-items: center; justify-content: center; padding-left: 1px; }
.quick-right { display: flex; align-items: center; flex: 1; }
.doc-count { width: 69px; padding-left: 1px; font-size: 14.5px; letter-spacing: -.3px; }
.avatar-slot { flex: 1; display: flex; justify-content: center; padding-right: 2px; }
.avatar { width: 31px; height: 31px; border-radius: 50%; background: #f0f0f0; display: flex; align-items: center; justify-content: center; font-size: 13px; letter-spacing: -.6px; color: #666; }

.ribbon { display: flex; height: 103px; border-bottom: 2px solid #e2e2e2; width: 1917px; }
.workspace { width: 138px; height: 77px; margin: 13px 7px 0 14px; border: 2px solid #dedede; border-radius: 5px; background: #f2f2f2; font: 700 14px Roboto, sans-serif; color: #444; letter-spacing: -.2px; display: flex; align-items: center; justify-content: center; }
.caret { display: inline-block; border: 4px solid transparent; border-top: 6px solid #333; border-bottom: 0; margin-left: 6px; }
.ribbon-main { width: 1140px; }
.tabs { height: 30px; display: flex; padding-left: 14px; letter-spacing: -.4px; }
.tabs span { width: 104px; text-align: center; padding-top: 6px; }
.tabs .active { width: 70px; color: #1a9adf; font-weight: 700; border-bottom: 3px solid #0f95dc; }
.tabs span:nth-child(2) { width: 143px; }
.tabs span:nth-child(3) { width: 65px; }
.tabs span:nth-child(4) { width: 120px; }
.tabs span:nth-child(5) { width: 111px; }
.tabs span:nth-child(6) { width: 139px; }
.tabs span:nth-child(7) { width: 83px; }
.groups { display: grid; grid-template-columns: 280px 336px 121px 124px 99px 86px 94px; }
.group { height: 70px; display: flex; flex-direction: column; align-items: center; }
.group + .group { background: linear-gradient(#dcdcdc, #dcdcdc) 0 3px / 2px 64px no-repeat; }
.tools { display: flex; gap: 6px; }
.modify .tools { padding-left: 2px; }
.tools svg { width: 48px; height: 48px; }
.tools .hover { background: #dadada; }
.label { line-height: 16px; margin-top: 5px; letter-spacing: -.4px; white-space: nowrap; }
.create .label, .modify .label { padding-right: 3px; }
.label .caret { margin-left: 5px; margin-bottom: 4px; }

.viewport { display: grid; position: relative; overflow: hidden; }
.viewport > * { grid-area: 1 / 1; }
.scene { width: 1920px; height: 903px; }
.cube-face { font: 500 18px Roboto, sans-serif; fill: #9b9fa5; }
.axis { font: 500 18px Roboto, sans-serif; }

.side { width: 376px; display: flex; flex-direction: column; padding: 5px 0 0 5px; z-index: 1; }
.browser-head, .comments { width: 375px; height: 31px; background: #f1f1f1; border: 1px solid #cfcfcf; display: flex; align-items: center; font-size: 14.5px; letter-spacing: -.35px; color: #666; }
.browser-head { padding-left: 5px; gap: 12px; }
.tree-wrap { display: flex; height: 833px; padding-top: 6px; }
.scroll-track { margin-left: 5px; width: 8px; height: 798px; background: #c8c9ca; padding-top: 246px; }
.scroll-thumb { width: 7px; height: 64px; border-radius: 4px; background: #9b9b9b; border: 1px solid #858585; }
.tree { margin-left: 28px; display: flex; flex-direction: column; gap: 5px; padding-top: .5px; }
.row { display: flex; height: 25px; }
.row svg { height: 25px; }
.node { display: flex; width: 303px; background: #f1f1f1; align-items: center; }
.name { margin-left: 12px; width: 209px; overflow: hidden; white-space: nowrap; letter-spacing: -.17px; color: #444; }
.name.tight { letter-spacing: -.45px; }
.name.wide { letter-spacing: -.08px; }
.comments { border-top: 0; padding-left: 30px; }
.comments span { flex: 1; color: #777; letter-spacing: -1px; }
.grip { width: 4px; height: 12px; margin: 0 1px 0 9px; border: solid #999; border-width: 0 1px 0 1px; }

.navbar { align-self: end; justify-self: start; margin: 0 0 3px 811px; width: 296px; height: 30px; background: #f0f0f0; display: flex; z-index: 1; }
.nav-caret { fill: #333; }

.tooltip { position: absolute; left: 130px; top: 1px; width: 416px; height: 473px; z-index: 2; background: #4f4f4f; border-radius: 10px; padding: 6px 12px 0 17px; color: #fff; font: 700 12px/15px "DejaVu Sans Condensed", "DejaVu Sans", sans-serif; font-stretch: condensed; letter-spacing: .06px; }
.tooltip h1 { margin: 0 0 10px; font-size: 12px; line-height: 15px; }
.tooltip p { margin: 0 0 15px; white-space: nowrap; }
.preview { width: 381px; height: 235px; margin: 24px 0 31px -5px; }
.dim text { font: 42px "Liberation Sans", sans-serif; fill: #444; }
.dim .soft { fill: #888; }
.edge { background: #1c1c20; }
```
FILE: script.js
```js
// Polar point around a gear centre, angle in degrees.
const polar = (cx, cy, r, deg) => {
  const a = deg * Math.PI / 180;
  return (cx + r * Math.cos(a)).toFixed(2) + ',' + (cy + r * Math.sin(a)).toFixed(2);
};

// Outline of a run of teeth; `first` is the angle of the first tooth tip.
function teeth(cx, cy, root, tip, first, count, total) {
  const p = 360 / total, mid = (root + tip) / 2;
  const pts = [];
  for (let i = 0; i < count; i++) {
    const a = first + i * p;
    const at = (k, r) => polar(cx, cy, r, a + k * p);
    pts.push(`${at(-.38, root)} Q${at(-.24, root)} ${at(-.22, mid)} L${at(-.17, tip - 1.5)} Q${at(-.14, tip)} ${at(0, tip)} Q${at(.14, tip)} ${at(.17, tip - 1.5)} L${at(.22, mid)} Q${at(.24, root)} ${at(.38, root)}`);
  }
  return 'M' + pts.join(' L');
}

// T-slot extrusion, three cells high, drawn in thirds of a pixel.
function rail() {
  const centres = [136, 407.5, 679];
  const side = (c, x, s) => {
    const X = v => x(v), Y = v => c + s * v;
    return `L${X(272)},${Y(-40)} Q${X(272)},${Y(-30)} ${X(262)},${Y(-30)} L${X(252)},${Y(-30)} Q${X(242)},${Y(-30)} ${X(242)},${Y(-40)} L${X(242)},${Y(-66)} Q${X(236)},${Y(-74)} ${X(230)},${Y(-68)} L${X(190)},${Y(-30)} Q${X(184)},${Y(-24)} ${X(184)},${Y(-16)} L${X(184)},${Y(16)} Q${X(184)},${Y(24)} ${X(190)},${Y(30)} L${X(230)},${Y(68)} Q${X(236)},${Y(74)} ${X(242)},${Y(66)} L${X(242)},${Y(40)} Q${X(242)},${Y(30)} ${X(252)},${Y(30)} L${X(262)},${Y(30)} Q${X(272)},${Y(30)} ${X(272)},${Y(40)} `;
  };
  let d = 'M20,0 L96,0 Q106,0 106,10 L106,20 Q106,30 96,30 L70,30 Q58,32 64,42 L104,80 Q110,88 120,88 L152,88 Q162,88 168,80 L208,42 Q214,32 202,30 L176,30 Q166,30 166,20 L166,10 Q166,0 176,0 L252,0 Q272,0 272,20 ';
  centres.forEach(c => { d += side(c, v => v, 1); });
  d += 'L272,795 Q272,815 252,815 L176,815 Q166,815 166,805 L166,795 Q166,785 176,785 L202,785 Q214,783 208,773 L168,735 Q162,727 152,727 L120,727 Q110,727 104,735 L64,773 Q58,783 70,785 L96,785 Q106,785 106,795 L106,805 Q106,815 96,815 L20,815 Q0,815 0,795 ';
  centres.slice().reverse().forEach(c => { d += side(c, v => 272 - v, -1); });
  d += 'L0,20 Q0,0 20,0Z';
  [0, 270.5].forEach(o => {
    d += `M110,${186 + o} L162,${186 + o} Q172,${186 + o} 180,${193 + o} L240,${255 + o} Q247,${273 + o} 240,${290 + o} L180,${352 + o} Q172,${360 + o} 162,${360 + o} L110,${360 + o} Q100,${360 + o} 92,${352 + o} L32,${290 + o} Q25,${273 + o} 32,${255 + o} L92,${193 + o} Q100,${186 + o} 110,${186 + o}Z`;
  });
  return d;
}

const shapes = {
  rail: rail(),
  pinion: teeth(971, 822, 52.5, 60.5, 84.4, 32, 32) + 'Z',
  plateR: teeth(973.7, 673.3, 86, 94.7, 70.6, 23, 50) + ' L919,607 Q922,604.500 927,604.700 L965,608.300 Q988,609 995.700,593.300 Q997,588 1003.300,550 L1020,520 L1084,530 C1073,570 1068,620 1067,660 L1068,680 Q1067,695 1059,712 L1052,711 Q1035,745 1008,752.500Z',
  plateL: teeth(792.5, 674, 86, 94.2, -45.4, 24, 50) + ' L745,755 L738,784 Q735,789 731.500,784 L702,701.700 L699,667 C700,630 696,580 685,535 L740,520 L763,552 L770,585 Q775,608 798,608.300 L843,606.500 Q848,606.500 853,611Z',
  arm: 'M1190,267.500 C1165,281 1120,312 1094,337 C1086,345 1079,354 1073.300,365 C1040,424 1016,490 1003.300,550 C1005,558 1011,562.500 1018,562.300 Q1022,562 1027,560 L1078,538 Q1082,535.500 1084,530 C1102,462 1137,400 1176.700,340 Q1188,325 1208,324 A30.500,30.500 0 1 0 1190,267.500Z'
};
document.querySelectorAll('[data-shape]').forEach(el => {
  el.setAttribute('d', shapes[el.dataset.shape]);
});

// Component tree. Rows without a name lie under the tooltip.
const hidden = [5, 8, 9];
const names = Array(14).fill(['']).concat([
  ['1263K193_MINIATURE 316', 'tight'], ['1263K193_MINIATURE 316', 'tight'], ['9684T280_FLANGE-MOUN', ''],
  ['6384K344_BALL BEARING', 'wide'], ['98164A625_TYPE 316 SS', 'wide'], ['98164A625_TYPE 316 SS', 'wide'],
  ['91525A411_TYPE 316 STA', ''], ['91525A411_TYPE 316 STA', ''], ['91831A005_TYPE 18-8 ST', 'wide'],
  ['91831A005_TYPE 18-8 ST', 'wide'], ['6384K344_BALL BEARING', 'wide'], ['6384K344_BALL BEARING', 'wide'], ['6384K344_BALL BEARING', 'wide']
]);
document.getElementById('tree').innerHTML = names.map(([name, fit], i) => `
  <div class="row"><svg width="27"><use href="#i-arrow"/></svg><div class="node">
    <svg width="30"><use href="#${hidden.includes(i) ? 'i-eye-off' : 'i-eye'}"/></svg><svg width="30"><use href="#i-body"/></svg>
    ${name ? `<span class="name ${fit}">Copy of ${name}</span><span>...</span>` : ''}
  </div></div>`).join('');
```
